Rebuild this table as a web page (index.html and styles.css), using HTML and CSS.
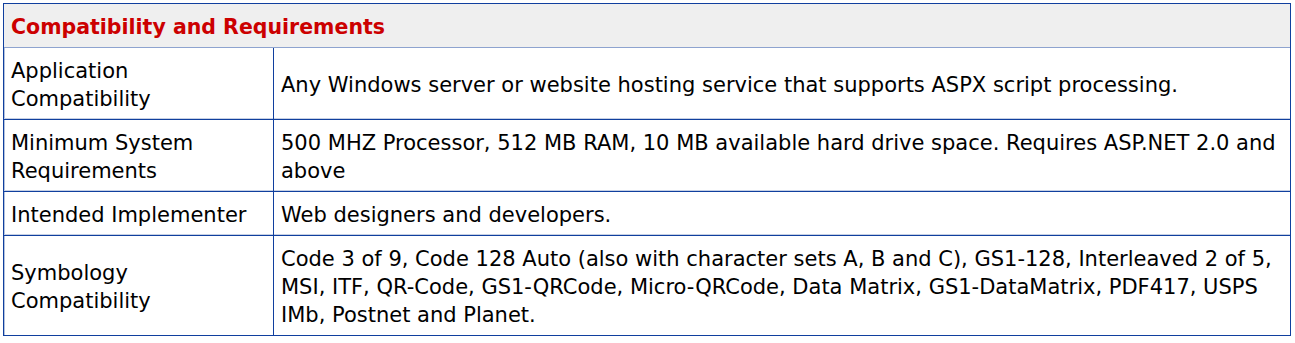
FILE: index.html
```html
<!DOCTYPE html>
<html lang="en">
<head>
  <meta charset="UTF-8" />
  <title>Compatibility and Requirements</title>
  <link rel="stylesheet" href="styles.css">
</head>
<body>
  <table class="spec-table">
    <tr>
      <th colspan="2" class="spec-head">Compatibility and Requirements</th>
    </tr>
    <tr>
      <td class="spec-label">Application Compatibility</td>
      <td class="spec-value">Any Windows server or website hosting service that supports ASPX script processing.</td>
    </tr>
    <tr>
      <td class="spec-label">Minimum System Requirements</td>
      <td class="spec-value">500 MHZ Processor, 512 MB RAM, 10 MB available hard drive space. Requires ASP.NET 2.0 and above</td>
    </tr>
    <tr>
      <td class="spec-label">Intended Implementer</td>
      <td class="spec-value">Web designers and developers.</td>
    </tr>
    <tr>
      <td class="spec-label">Symbology Compatibility</td>
      <td class="spec-value">Code 3 of 9, Code 128 Auto (also with character sets A, B and C), GS1-128, Interleaved 2 of 5, MSI, ITF, QR-Code, GS1-QRCode, Micro-QRCode, Data Matrix, GS1-DataMatrix, PDF417, USPS IMb, Postnet and Planet.</td>
    </tr>
  </table>
</body>
</html>
```

FILE: styles.css
```css
body {
  margin: 0;
  padding: 3px 5px 0 3px;
  background: #fff;
  font-family: 'DejaVu Sans', Verdana, sans-serif;
}
.spec-table {
  width: 1288px;
  border-collapse: separate;
  border-spacing: 0;
  border: 1px solid #103f9e;
  box-shadow: inset 1px 1px 0 #b4c2dc;
}
.spec-head {
  background: #efefef;
  color: #cc0000;
  font-size: 20.5px;
  font-weight: bold;
  text-align: left;
  padding: 2px 7px 0 7px;
  height: 41px;
  border-bottom: 1px solid #8ea3cf;
}
.spec-table td {
  font-size: 21px;
  line-height: 28px;
  color: #000;
  padding: 9px 7px 6px 7px;
  vertical-align: middle;
  border-bottom: 1px solid #103f9e;
  box-shadow: inset 0 -1px 0 #c6d0e4;
}
.spec-table tr:last-child td {
  border-bottom: none;
  box-shadow: none;
}
.spec-label {
  width: 255px;
  border-right: 1px solid #103f9e;
}
.spec-value {
  padding-left: 8px;
}
```
